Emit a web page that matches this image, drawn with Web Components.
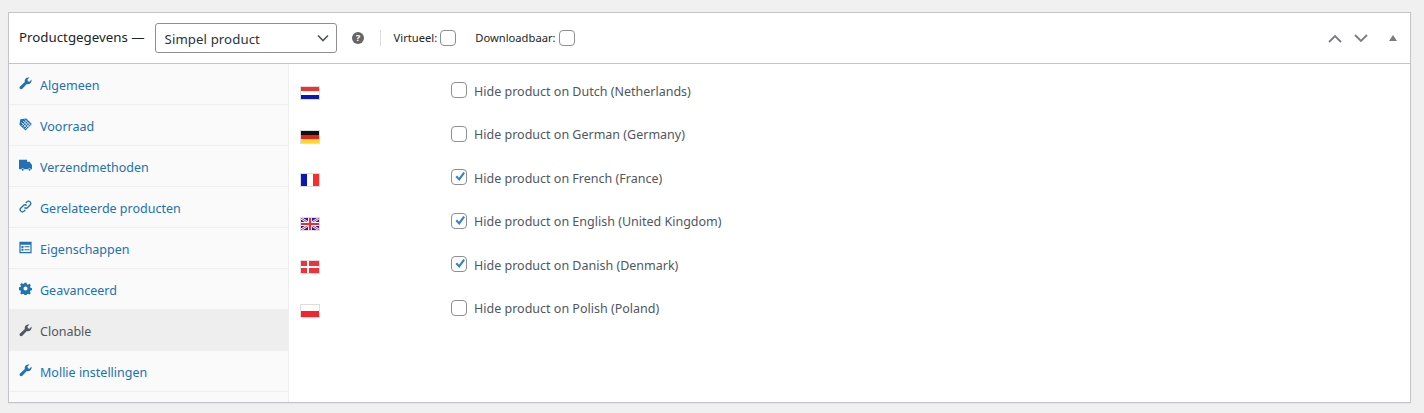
<!DOCTYPE html>
<html lang="nl">
<head>
<meta charset="utf-8">
<title>Productgegevens</title>
<style>
  html, body { margin: 0; height: 100%; }
  body {
    background: #f0f0f1;
    color: #3c434a;
    font: 12.5px/1.4 "Noto Sans", "Open Sans", sans-serif;
    padding: 12px 13px 10px 8px;
    box-sizing: border-box;
  }
</style>
</head>
<body>
<product-panel>
  <tab-item slot="tabs" icon="wrench">Algemeen</tab-item>
  <tab-item slot="tabs" icon="tag">Voorraad</tab-item>
  <tab-item slot="tabs" icon="truck">Verzendmethoden</tab-item>
  <tab-item slot="tabs" icon="link">Gerelateerde producten</tab-item>
  <tab-item slot="tabs" icon="list">Eigenschappen</tab-item>
  <tab-item slot="tabs" icon="gear">Geavanceerd</tab-item>
  <tab-item slot="tabs" icon="wrench" active>Clonable</tab-item>
  <tab-item slot="tabs" icon="wrench">Mollie instellingen</tab-item>

  <lang-row flag="nl">Hide product on Dutch (Netherlands)</lang-row>
  <lang-row flag="de">Hide product on German (Germany)</lang-row>
  <lang-row flag="fr" checked>Hide product on French (France)</lang-row>
  <lang-row flag="gb" checked>Hide product on English (United Kingdom)</lang-row>
  <lang-row flag="dk" checked>Hide product on Danish (Denmark)</lang-row>
  <lang-row flag="pl">Hide product on Polish (Poland)</lang-row>
</product-panel>

<script>
const ICONS = {
  wrench: `<path d="M15.4 3.2l-2.500 2.500-2-.5-.5-2L12.900.7C11.200.2 9.500.6 8.300 1.800 7.100 3 6.700 4.700 7.200 6.300L1.300 11.600c-.9.8-.9 2 0 2.800s2 .8 2.800 0L9.600 8.700c1.600.5 3.300.1 4.500-1.100 1.200-1.200 1.600-2.900 1.300-4.400z"/>`,
  tag: `<path d="M9 .5L15.800 7.300 8 15.500 .6 8.200 1.500 1.500z"/><g stroke="#fafafa" stroke-width=".9"><path d="M5 3.500l7.500 7.500M3 5.500l7.500 7.500M7 1.800l7 7M9.500 3.200L3.500 9.800M11.500 5L5.500 11.600M13.500 7L7.500 13.600"/></g>`,
  truck: `<path d="M0 1h10v2.500h3l3 4v5h-1.200a2 2 0 0 0-3.600 0H6.300a2 2 0 0 0-3.600 0H.6a.6.6 0 0 1-.6-.6z"/><circle cx="4.500" cy="13.300" r="1.300"/><circle cx="13" cy="13.300" r="1.300"/>`,
  link: `<path fill="none" stroke="currentColor" stroke-width="1.700" d="M6.700 9.300a2.700 2.700 0 0 0 3.900 0l3.100-3.100a2.700 2.700 0 0 0-3.900-3.900L8.300 3.800"/><path fill="none" stroke="currentColor" stroke-width="1.700" d="M9.300 6.700a2.700 2.700 0 0 0-3.900 0l-3.100 3.100a2.700 2.700 0 0 0 3.900 3.900l1.500-1.500"/>`,
  list: `<path fill-rule="evenodd" d="M.5 1h15v14H.5zM2 4.500V13.500h12V4.500z"/><path d="M3 6h2.500v2.500H3zM3 9.500h2.500V12H3zM6.800 6.500H13v1.300H6.800zM6.800 10H13v1.300H6.800z"/>`,
  gear: `<path fill-rule="evenodd" d="M6.700.8h2.600l.4 2 1.300.6 1.800-1.100 1.800 1.800-1.100 1.800.6 1.300 2 .4v2.600l-2 .4-.6 1.300 1.100 1.800-1.800 1.800-1.800-1.100-1.300.6-.4 2H6.700l-.4-2-1.300-.6-1.800 1.100-1.800-1.800 1.100-1.800-.6-1.300-2-.4V6.600l2-.4.6-1.300-1.100-1.800 1.800-1.800 1.800 1.100 1.300-.6zM8 5.500a2.500 2.500 0 1 0 0 5 2.500 2.500 0 0 0 0-5z"/>`
};

const FLAGS = {
  nl: `<rect width="18" height="4" fill="#f42f2f"/><rect y="4" width="18" height="4" fill="#fff"/><rect y="8" width="18" height="4" fill="#0a17b5"/>`,
  de: `<rect width="18" height="4" fill="#111"/><rect y="4" width="18" height="4" fill="#e8211c"/><rect y="8" width="18" height="4" fill="#fbd92a"/>`,
  fr: `<rect width="6" height="12" fill="#0a17b5"/><rect x="6" width="6" height="12" fill="#fff"/><rect x="12" width="6" height="12" fill="#f42f2f"/>`,
  gb: `<rect width="18" height="12" fill="#1420c0"/><path d="M0 0l18 12M18 0L0 12" stroke="#fff" stroke-width="2.400"/><path d="M0 0l18 12M18 0L0 12" stroke="#ee2b35" stroke-width="1"/><path d="M9 0v12M0 6h18" stroke="#fff" stroke-width="4"/><path d="M9 0v12M0 6h18" stroke="#ee2b35" stroke-width="2.200"/>`,
  dk: `<rect width="18" height="12" fill="#f0303a"/><path d="M7 0v12M0 6h18" stroke="#fff" stroke-width="2"/>`,
  pl: `<rect width="18" height="6" fill="#fff"/><rect y="6" width="18" height="6" fill="#f0252f"/>`
};

class ProductPanel extends HTMLElement {
  constructor() {
    super();
    this.attachShadow({ mode: "open" });
  }

  connectedCallback() {
    this.shadowRoot.innerHTML = `
      <style>
        :host {
          display: flex;
          flex-direction: column;
          height: 391px;
          box-sizing: border-box;
          background: #fff;
          border: 1px solid #c3c4c7;
          box-shadow: 0 1px 1px rgba(0, 0, 0, 0.04);
        }
        .main { display: flex; flex: 1; min-height: 0; }
        .tabs {
          width: 279px;
          background: #fafafa;
          border-right: 1px solid #eee;
          flex: none;
        }
        .content { flex: 1; padding: 5.5px 0 0 11px; }
      </style>
      <panel-header></panel-header>
      <div class="main">
        <div class="tabs"><slot name="tabs"></slot></div>
        <div class="content"><slot></slot></div>
      </div>
    `;
  }
}

class PanelHeader extends HTMLElement {
  constructor() {
    super();
    this.attachShadow({ mode: "open" });
  }

  connectedCallback() {
    this.shadowRoot.innerHTML = `
      <style>
        :host {
          display: flex;
          align-items: center;
          height: 51px;
          box-sizing: border-box;
          border-bottom: 1px solid #c3c4c7;
          padding-left: 10px;
          font-size: 13px;
          color: #1d2327;
        }
        .title { font-size: 13.3px; font-weight: 400; margin-right: 10px; position: relative; top: -1px; }
        .select {
          width: 182px;
          height: 30px;
          box-sizing: border-box;
          border: 1px solid #8c8f94;
          border-radius: 3px;
          padding: 2px 7px 0 9px;
          display: flex;
          align-items: center;
          justify-content: space-between;
          font-size: 13.2px;
          color: #2c3338;
          letter-spacing: 0.1px;
        }
        .select svg { position: relative; top: -1px; }
        .help { margin-left: 15px; width: 12px; height: 12px; flex: none; }
        .sep { width: 1px; height: 16px; background: #ddd; margin: 0 13px 0 16px; }
        .opt { display: flex; align-items: center; font-size: 11.200px; gap: 3px; }
        .opt + .opt { margin-left: 19px; }
        .box {
          width: 16px;
          height: 16px;
          box-sizing: border-box;
          border: 1px solid #8c8f94;
          border-radius: 4px;
          background: #fff;
        }
        .actions { margin-left: auto; display: flex; align-items: center; color: #787c82; }
        .actions svg { display: block; }
      </style>
      <span class="title">Productgegevens —</span>
      <div class="select">
        <span>Simpel product</span>
        <svg width="12" height="8" viewBox="0 0 12 8" fill="none" stroke="#50575e" stroke-width="1.700"><path d="M1 1.500l5 5 5-5"/></svg>
      </div>
      <svg class="help" viewBox="0 0 12 12"><circle cx="6" cy="6" r="6" fill="#666"/><text x="6" y="9.300" text-anchor="middle" font-size="9.500" font-weight="700" font-family="Noto Sans, sans-serif" fill="#fff">?</text></svg>
      <span class="sep"></span>
      <label class="opt">Virtueel:<span class="box"></span></label>
      <label class="opt">Downloadbaar:<span class="box"></span></label>
      <div class="actions">
        <svg width="14" height="9" viewBox="0 0 14 9" fill="none" stroke="currentColor" stroke-width="1.800"><path d="M1 8l6-6 6 6"/></svg>
        <svg style="margin-left:12px" width="14" height="9" viewBox="0 0 14 9" fill="none" stroke="currentColor" stroke-width="1.800"><path d="M1 1l6 6 6-6"/></svg>
        <svg style="margin:0 13px 0 21px" width="8" height="6" viewBox="0 0 8 6" fill="currentColor"><path d="M4 0l4 6H0z"/></svg>
      </div>
    `;
  }
}

class TabItem extends HTMLElement {
  constructor() {
    super();
    this.attachShadow({ mode: "open" });
  }

  connectedCallback() {
    const icon = ICONS[this.getAttribute("icon")] || "";
    this.shadowRoot.innerHTML = `
      <style>
        :host {
          display: flex;
          align-items: center;
          height: 41px;
          box-sizing: border-box;
          padding: 3px 10px 0 10px;
          border-bottom: 1px solid #eee;
          color: #2271b1;
          font-size: 12.5px;
        }
        :host([active]) {
          background: #eee;
          color: #50575e;
          border-bottom: 0;
        }
        svg { width: 13px; height: 13px; margin-right: 8px; fill: currentColor; flex: none; position: relative; top: -2px; }
      </style>
      <svg viewBox="0 0 16 16">${icon}</svg>
      <span><slot></slot></span>
    `;
  }
}

class LangRow extends HTMLElement {
  constructor() {
    super();
    this.attachShadow({ mode: "open" });
  }

  connectedCallback() {
    const flag = FLAGS[this.getAttribute("flag")] || "";
    const checked = this.hasAttribute("checked");
    this.shadowRoot.innerHTML = `
      <style>
        :host {
          display: flex;
          align-items: center;
          height: 43.5px;
          color: #50575e;
          font-size: 12.5px;
        }
        .flag {
          width: 18px;
          height: 12px;
          border: 1px solid #ddd;
          flex: none;
          display: block;
          position: relative;
          top: 2px;
          margin-right: 131px;
        }
        .box {
          width: 16px;
          height: 16px;
          box-sizing: border-box;
          border: 1px solid #8c8f94;
          border-radius: 4px;
          background: #fff;
          margin-right: 7px;
          flex: none;
          position: relative;
          top: -1px;
        }
        .box svg { position: absolute; left: 0; top: -1px; }
      </style>
      <svg class="flag" viewBox="0 0 18 12" preserveAspectRatio="none">${flag}</svg>
      <span class="box">${checked ? `<svg width="16" height="16" viewBox="0 0 16 16"><path d="M3.500 8l1.600-1.500L7 8.800l4.300-5.800 1.700 1.200-5.700 7.800z" fill="#3582c4"/></svg>` : ""}</span>
      <span><slot></slot></span>
    `;
  }
}

customElements.define("product-panel", ProductPanel);
customElements.define("panel-header", PanelHeader);
customElements.define("tab-item", TabItem);
customElements.define("lang-row", LangRow);
</script>
</body>
</html>
